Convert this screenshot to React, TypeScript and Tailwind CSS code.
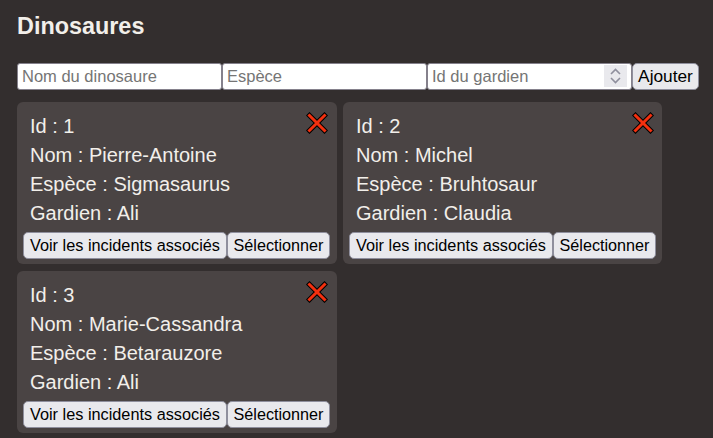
const DINOS = [
  { id: 1, nom: "Pierre-Antoine", espece: "Sigmasaurus", gardien: "Ali" },
  { id: 2, nom: "Michel", espece: "Bruhtosaur", gardien: "Claudia" },
  { id: 3, nom: "Marie-Cassandra", espece: "Betarauzore", gardien: "Ali" },
]

const inputCls = "h-[27px] w-full bg-white border border-[#85818c] rounded-[3px] px-[4px] text-[16.5px] text-black placeholder:text-[#757575] outline-none"
const btnCls = "h-[27px] shrink-0 bg-[#e9e9ed] border border-[#8f8f9d] rounded-[5px] leading-[19px] text-black whitespace-nowrap"

function Cross() {
  return (
    <svg width="22" height="22" viewBox="0 0 22 22" className="absolute left-[289px] top-[10px]">
      <path d="M3.5 3.5 L18.5 18.5 M18.5 3.5 L3.5 18.5" stroke="#000" strokeWidth="5" strokeLinecap="square" fill="none" />
      <path d="M3.5 3.5 L18.5 18.5 M18.5 3.5 L3.5 18.5" stroke="#f3300f" strokeWidth="3" strokeLinecap="square" fill="none" />
    </svg>
  )
}

export default function App() {
  return (
    <div className="min-h-[438px] bg-[#332e2e] px-[17px] pt-[13px] text-[#f2efea] font-['Liberation_Sans',Arial,sans-serif]">
      <h1 className="text-[23.4px] leading-[27px] font-bold">Dinosaures</h1>

      {/* Formulaire */}
      <div className="flex mt-[23px] mb-[12px]">
        <div className="w-[205px] shrink-0"><input className={inputCls} placeholder="Nom du dinosaure" /></div>
        <div className="w-[205px] shrink-0"><input className={inputCls} placeholder="Espèce" /></div>
        <div className="relative w-[205px] shrink-0">
          <input className={inputCls} placeholder="Id du gardien" />
          <div className="absolute right-[5px] top-[2px] w-[23px] h-[22px] bg-[#e9e9ed] flex items-center justify-center">
            <svg width="13" height="18" viewBox="0 0 13 18" fill="none" stroke="#8f8f9d" strokeWidth="1.6">
              <path d="M2 7 L6.5 2.5 L11 7" />
              <path d="M2 11 L6.5 15.5 L11 11" />
            </svg>
          </div>
        </div>
        <button className={btnCls + " w-[67px] text-[17.3px]"}>Ajouter</button>
      </div>

      <div className="flex flex-wrap gap-x-[6px] gap-y-[7px] w-[660px]">
        {DINOS.map(d => (
          <div key={d.id} className="relative w-[320px] h-[162px] bg-[#4a4444] rounded-[6px] pl-[13px] pt-[10px] text-[20px] leading-[29px] even:w-[319px]">
            <Cross />
            <p>Id : {d.id}</p>
            <p>Nom : {d.nom}</p>
            <p>Espèce : {d.espece}</p>
            <p>Gardien : {d.gardien}</p>
            <div className="flex -ml-[7px] mt-[4px]">
              <button className={btnCls + " w-[204px] text-[16.3px]"}>Voir les incidents associés</button>
              <button className={btnCls + " w-[103px] text-[16.2px]"}>Sélectionner</button>
            </div>
          </div>
        ))}
      </div>
    </div>
  )
}
